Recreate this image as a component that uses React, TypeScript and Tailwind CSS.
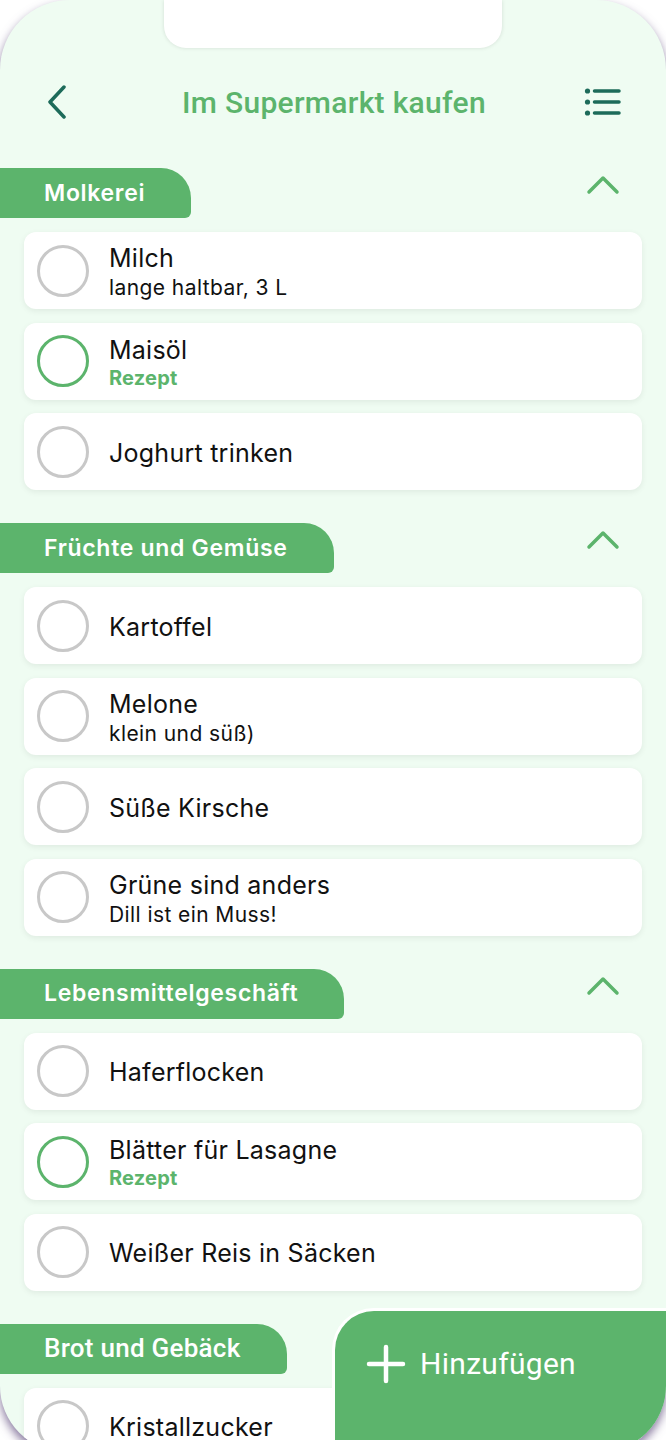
import React from "react";

type Item = { name: string; note?: string; recipe?: boolean };
type Section = { title: string; font?: string; items: Item[] };

const sections: Section[] = [
  {
    title: "Molkerei",
    items: [
      { name: "Milch", note: "lange haltbar, 3 L" },
      { name: "Maisöl", recipe: true },
      { name: "Joghurt trinken" },
    ],
  },
  {
    title: "Früchte und Gemüse",
    items: [
      { name: "Kartoffel" },
      { name: "Melone", note: "klein und süß)" },
      { name: "Süße Kirsche" },
      { name: "Grüne sind anders", note: "Dill ist ein Muss!" },
    ],
  },
  {
    title: "Lebensmittelgeschäft",
    items: [
      { name: "Haferflocken" },
      { name: "Blätter für Lasagne", recipe: true },
      { name: "Weißer Reis in Säcken" },
    ],
  },
  {
    title: "Brot und Gebäck",
    font: "roboto",
    items: [{ name: "Kristallzucker" }],
  },
];

function ItemCard({ item }: { item: Item }) {
  return (
    <div className="h-[77px] mx-[24px] bg-white rounded-[12px] shadow-[0_2px_6px_rgba(0,0,0,0.07)] flex items-center shrink-0">
      <div
        className={`ml-[13px] w-[52px] h-[52px] rounded-full border-[3px] shrink-0 ${
          item.recipe ? "border-[#5cb46c]" : "border-[#c8c8c8]"
        }`}
      />
      <div className="ml-[20px] flex flex-col pt-[2px]">
        <span className="text-[25px] leading-[30px] tracking-[0.01em] text-[#111111]">{item.name}</span>
        {item.note && (
          <span className="mt-[3px] text-[21px] leading-[24px] tracking-[0.02em] text-[#111111]">
            {item.note}
          </span>
        )}
        {item.recipe && (
          <span className="mt-[1px] text-[20px] leading-[24px] tracking-[0.01em] font-bold text-[#5cb46c]">
            Rezept
          </span>
        )}
      </div>
    </div>
  );
}

function SectionBlock({ section }: { section: Section }) {
  return (
    <div className="flex flex-col">
      {/* Tab header */}
      <div className="flex justify-between items-start pr-[46px]">
        <div
          className={`h-[50px] w-fit bg-[#5cb46c] rounded-tr-[30px] rounded-br-[6px] pl-[44px] pr-[46px] flex items-center text-white ${
            section.font === "roboto"
              ? "font-['Roboto',sans-serif] font-medium text-[26px] tracking-[0.01em]"
              : "font-semibold text-[23px] tracking-[0.03em]"
          }`}
        >
          {section.title}
        </div>
        <svg width="34" height="20" viewBox="0 0 34 20" className="mt-[7px]" fill="none">
          <path d="M3 17 L17 3 L31 17" stroke="#5cb46c" strokeWidth="3.5" strokeLinecap="round" strokeLinejoin="round" />
        </svg>
      </div>
      <div className="mt-[14px] flex flex-col gap-[13.5px]">
        {section.items.map((it) => (
          <ItemCard key={it.name} item={it} />
        ))}
      </div>
    </div>
  );
}

export default function App() {
  return (
    <div className="min-h-screen bg-white font-['Inter',sans-serif]">
      <div className="relative w-[666px] h-[1452px] bg-[#effcf2] rounded-t-[70px] rounded-b-[66px] overflow-hidden shadow-[0_5px_10px_rgba(95,75,125,0.75)]">
        {/* Notch */}
        <div className="absolute top-0 left-[164px] w-[338px] h-[48px] bg-white rounded-b-[22px] shadow-[0_0_4px_rgba(0,0,0,0.12)]" />

        {/* Header */}
        <div className="pt-[72px]">
          <div className="h-[60px] grid grid-cols-[1fr_auto_1fr] items-center pl-[46px] pr-[44px]">
            <svg width="22" height="34" viewBox="0 0 22 34" fill="none">
              <path d="M18 2 L4 17 L18 32" stroke="#1d6b5a" strokeWidth="3.5" strokeLinecap="round" strokeLinejoin="round" />
            </svg>
            <h1 className="font-['Roboto',sans-serif] font-medium text-[30px] tracking-[0.01em] text-[#5cb46c]">
              Im Supermarkt kaufen
            </h1>
            <svg width="38" height="30" viewBox="0 0 38 30" fill="none" className="justify-self-end">
              <circle cx="3.5" cy="4" r="2.6" fill="#1d6b5a" />
              <circle cx="3.5" cy="15" r="2.6" fill="#1d6b5a" />
              <circle cx="3.5" cy="26" r="2.6" fill="#1d6b5a" />
              <path d="M10.5 4 H35 M10.5 15 H35 M10.5 26 H35" stroke="#1d6b5a" strokeWidth="3.5" strokeLinecap="round" />
            </svg>
          </div>
        </div>

        {/* Sections */}
        <div className="mt-[36px] flex flex-col gap-[33px]">
          {sections.map((s) => (
            <SectionBlock key={s.title} section={s} />
          ))}
        </div>

        {/* Add button */}
        <div className="absolute left-[332px] top-[1308px] right-0 bottom-0 bg-[#5cb46c] border-l-[3px] border-t-[3px] border-white rounded-tl-[42px] pl-[31px] pt-[30px]">
          <div className="flex items-center gap-[14px]">
            <svg width="40" height="40" viewBox="0 0 40 40" fill="none">
              <path d="M20 3 V37 M3 20 H37" stroke="white" strokeWidth="4.5" strokeLinecap="round" />
            </svg>
            <span className="font-['Roboto',sans-serif] text-[30px] tracking-[0.01em] text-white">Hinzufügen</span>
          </div>
        </div>
      </div>
    </div>
  );
}
